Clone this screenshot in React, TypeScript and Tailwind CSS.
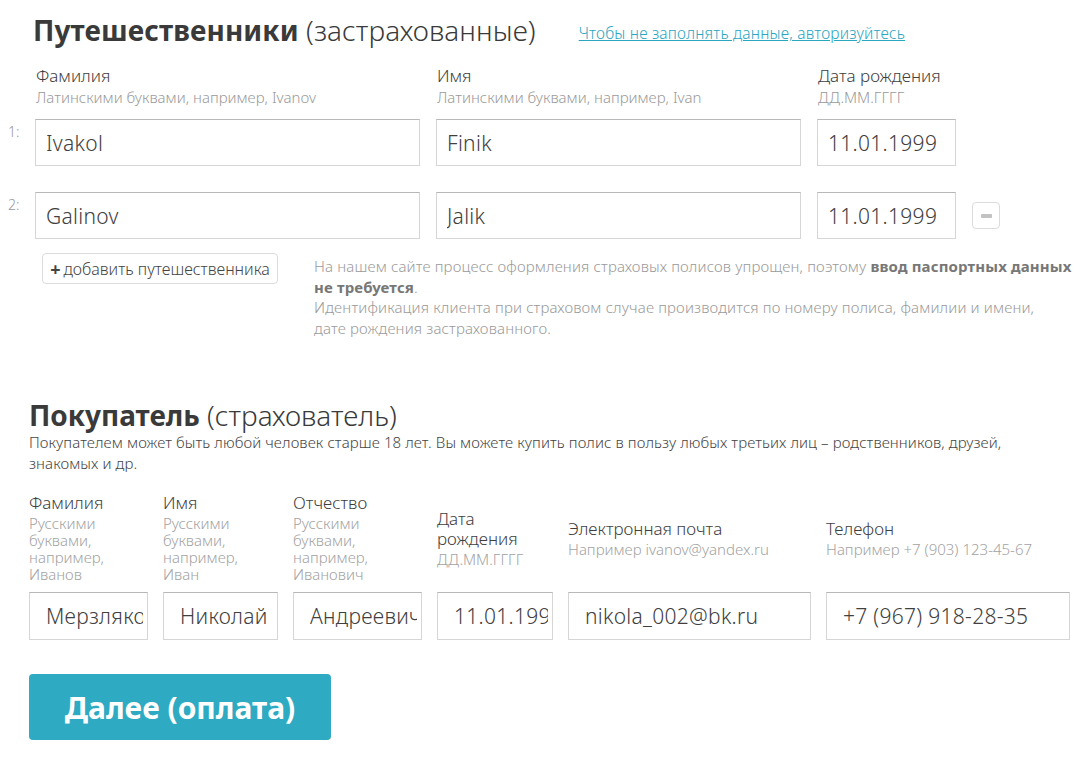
import React from "react";

const font = { fontFamily: '"Noto Sans", "Open Sans", sans-serif' };

function Field({ value, className = "" }: { value: string; className?: string }) {
  return (
    <input
      readOnly
      defaultValue={value}
      className={`border border-[#d6d6d6] border-t-[#b8b8b8] bg-white text-[21px] font-light tracking-[0.3px] text-[#404040] outline-none ${className}`}
    />
  );
}

const travellers = [
  { n: "1:", last: "Ivakol", first: "Finik", date: "11.01.1999", remove: false },
  { n: "2:", last: "Galinov", first: "Jalik", date: "11.01.1999", remove: true },
];

const buyerCols = [
  { label: "Фамилия", hint: "Русскими буквами, например, Иванов", value: "Мерзляков", w: "w-[119px]", hw: "max-w-[100px]" },
  { label: "Имя", hint: "Русскими буквами, например, Иван", value: "Николай", w: "w-[115px]", hw: "max-w-[100px]" },
  { label: "Отчество", hint: "Русскими буквами, например, Иванович", value: "Андреевич", w: "w-[129px]", hw: "max-w-[100px]" },
  { label: "Дата рождения", hint: "ДД.ММ.ГГГГ", value: "11.01.1999", w: "w-[116px]", hw: "" },
  { label: "Электронная почта", hint: "Например ivanov@yandex.ru", value: "nikola_002@bk.ru", w: "w-[243px]", hw: "" },
  { label: "Телефон", hint: "Например +7 (903) 123-45-67", value: "+7 (967) 918-28-35", w: "w-[244px]", hw: "" },
];

export default function App() {
  return (
    <div className="min-h-[762px] w-[1092px] bg-white text-[#444]" style={font}>
      {/* Путешественники */}
      <section className="pl-[8px] pt-[12px]">
        <div className="flex items-end pl-[25px]">
          <h1 className="text-[28px] font-light leading-[36px] tracking-[0.1px] text-[#3a3a3a]">
            <span className="font-bold">Путешественники</span> (застрахованные)
          </h1>
          <a href="#" className="mb-[3px] ml-[43px] text-[15.5px] font-light tracking-[0.2px] text-[#2aa6bf] underline">
            Чтобы не заполнять данные, авторизуйтесь
          </a>
        </div>

        <div className="mt-[18px] flex gap-[16px] pl-[28px]">
          {[
            { l: "Фамилия", h: "Латинскими буквами, например, Ivanov", w: "w-[385px]" },
            { l: "Имя", h: "Латинскими буквами, например, Ivan", w: "w-[365px]" },
            { l: "Дата рождения", h: "ДД.ММ.ГГГГ", w: "w-[139px]" },
          ].map((c) => (
            <div key={c.l} className={c.w}>
              <div className="text-[17px] font-light leading-[20px] text-[#404040]">{c.l}</div>
              <div className="mt-[2px] whitespace-nowrap text-[15px] font-light leading-[18px] text-[#9a9a9a]">{c.h}</div>
            </div>
          ))}
        </div>

        <div className="mt-[13px] flex flex-col gap-[26px]">
          {travellers.map((t) => (
            <div key={t.n} className="flex items-start">
              <div className="w-[27px] pt-[2px] text-[14px] font-light text-[#9a9a9a]">{t.n}</div>
              <div className="flex items-center gap-[16px]">
                <Field value={t.last} className="h-[47px] w-[385px] px-[10px]" />
                <Field value={t.first} className="h-[47px] w-[365px] px-[10px]" />
                <Field value={t.date} className="h-[47px] w-[139px] px-[10px]" />
                {t.remove && (
                  <button className="flex h-[27px] w-[28px] items-center justify-center rounded-[4px] border border-[#dcdcdc] bg-white">
                    <span className="h-[4px] w-[11px] rounded-[1px] bg-[#c2c2c2]" />
                  </button>
                )}
              </div>
            </div>
          ))}
        </div>

        <div className="mt-[14px] flex items-start pl-[34px]">
          <button className="flex h-[31px] w-[236px] shrink-0 items-center justify-center rounded-[4px] border border-[#dcdcdc] bg-white text-[16px] font-light text-[#444]">
            <span className="mr-[3px] text-[18px] font-bold leading-none">+</span>добавить путешественника
          </button>
          <p className="ml-[36px] w-[758px] pt-[3px] text-[15px] font-light leading-[20.5px] tracking-[0.15px] text-[#9a9a9a]">
            На нашем сайте процесс оформления страховых полисов упрощен, поэтому{" "}
            <b className="font-bold text-[#777]">ввод паспортных данных</b>
            <br />
            <b className="font-bold text-[#777]">не требуется</b>.
            <br />
            Идентификация клиента при страховом случае производится по номеру полиса, фамилии и имени,
            <br />
            дате рождения застрахованного.
          </p>
        </div>
      </section>

      {/* Покупатель */}
      <section className="pl-[29px] pt-[60px]">
        <h2 className="text-[28px] font-light leading-[34px] text-[#3a3a3a]">
          <span className="font-bold">Покупатель</span> (страхователь)
        </h2>
        <p className="w-[1030px] text-[15px] font-light leading-[21px] tracking-[0.1px] text-[#444]">
          Покупателем может быть любой человек старше 18 лет. Вы можете купить полис в пользу любых третьих лиц – родственников, друзей, знакомых и др.
        </p>

        <div className="mt-[14px] flex gap-[15px]">
          {buyerCols.map((c) => (
            <div key={c.label} className={`flex flex-col ${c.w}`}>
              <div className="flex h-[100px] flex-col justify-center">
                <div className="text-[17px] font-light leading-[20px] text-[#404040]">{c.label}</div>
                <div className={`mt-[2px] text-[15px] font-light leading-[17px] text-[#a3a3a3] ${c.hw}`}>{c.hint}</div>
              </div>
              <Field value={c.value} className="mt-[4px] h-[48px] w-full pl-[16px] pr-[4px]" />
            </div>
          ))}
        </div>

        <button className="mt-[34px] h-[66px] w-[302px] rounded-[4px] bg-[#2eaac3] text-[30px] font-bold text-white">
          Далее (оплата)
        </button>
      </section>
    </div>
  );
}
